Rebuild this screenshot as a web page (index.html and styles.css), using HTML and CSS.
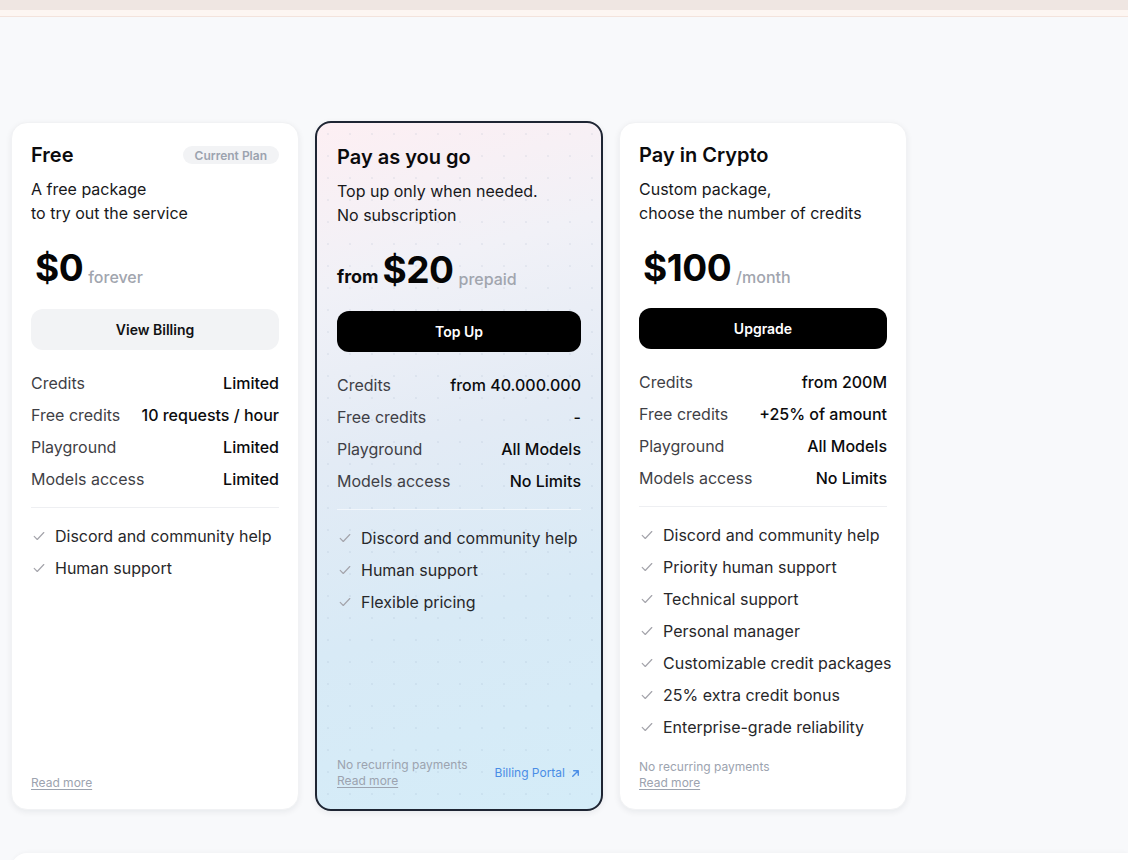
FILE: index.html
```html
<!DOCTYPE html>
<html lang="en">
<head>
<meta charset="utf-8">
<title>Plans</title>
<link rel="stylesheet" href="styles.css">
</head>
<body>
<div class="topbar"><div class="topbar-strip"></div></div>
<main class="page">
  <div class="plans">
    <article class="card">
      <header class="card-head">
        <h2 class="card-title">Free</h2>
        <span class="badge">Current Plan</span>
      </header>
      <p class="card-desc">A free package<br>to try out the service</p>
      <div class="price"><span class="price-amount">$0</span><span class="price-unit">forever</span></div>
      <button class="btn btn-light">View Billing</button>
      <dl class="specs">
        <div class="spec"><dt>Credits</dt><dd>Limited</dd></div>
        <div class="spec"><dt>Free credits</dt><dd>10 requests / hour</dd></div>
        <div class="spec"><dt>Playground</dt><dd>Limited</dd></div>
        <div class="spec"><dt>Models access</dt><dd>Limited</dd></div>
      </dl>
      <hr class="divider">
      <ul class="features">
        <li><svg class="check" viewBox="0 0 16 16"><path d="M2.5 8.5l3.5 3.5 7.5-8"/></svg>Discord and community help</li>
        <li><svg class="check" viewBox="0 0 16 16"><path d="M2.5 8.5l3.5 3.5 7.5-8"/></svg>Human support</li>
      </ul>
      <footer class="card-foot">
        <div class="foot-notes"><a class="read-more" href="#">Read more</a></div>
      </footer>
    </article>

    <article class="card card-featured">
      <header class="card-head">
        <h2 class="card-title">Pay as you go</h2>
      </header>
      <p class="card-desc">Top up only when needed.<br>No subscription</p>
      <div class="price"><span class="price-from">from</span><span class="price-amount">$20</span><span class="price-unit">prepaid</span></div>
      <button class="btn btn-dark">Top Up</button>
      <dl class="specs">
        <div class="spec"><dt>Credits</dt><dd>from 40.000.000</dd></div>
        <div class="spec"><dt>Free credits</dt><dd>-</dd></div>
        <div class="spec"><dt>Playground</dt><dd>All Models</dd></div>
        <div class="spec"><dt>Models access</dt><dd>No Limits</dd></div>
      </dl>
      <hr class="divider">
      <ul class="features">
        <li><svg class="check" viewBox="0 0 16 16"><path d="M2.5 8.5l3.5 3.5 7.5-8"/></svg>Discord and community help</li>
        <li><svg class="check" viewBox="0 0 16 16"><path d="M2.5 8.5l3.5 3.5 7.5-8"/></svg>Human support</li>
        <li><svg class="check" viewBox="0 0 16 16"><path d="M2.5 8.5l3.5 3.5 7.5-8"/></svg>Flexible pricing</li>
      </ul>
      <footer class="card-foot">
        <div class="foot-notes">
          <span class="foot-note">No recurring payments</span>
          <a class="read-more" href="#">Read more</a>
        </div>
        <a class="portal-link" href="#">Billing Portal<svg class="arrow" viewBox="0 0 12 12"><path d="M3 9L9 3M4 3h5v5"/></svg></a>
      </footer>
    </article>

    <article class="card">
      <header class="card-head">
        <h2 class="card-title">Pay in Crypto</h2>
      </header>
      <p class="card-desc">Custom package,<br>choose the number of credits</p>
      <div class="price"><span class="price-amount">$100</span><span class="price-unit">/month</span></div>
      <button class="btn btn-dark btn-tight">Upgrade</button>
      <dl class="specs">
        <div class="spec"><dt>Credits</dt><dd>from 200M</dd></div>
        <div class="spec"><dt>Free credits</dt><dd>+25% of amount</dd></div>
        <div class="spec"><dt>Playground</dt><dd>All Models</dd></div>
        <div class="spec"><dt>Models access</dt><dd>No Limits</dd></div>
      </dl>
      <hr class="divider">
      <ul class="features">
        <li><svg class="check" viewBox="0 0 16 16"><path d="M2.5 8.5l3.5 3.5 7.5-8"/></svg>Discord and community help</li>
        <li><svg class="check" viewBox="0 0 16 16"><path d="M2.5 8.5l3.5 3.5 7.5-8"/></svg>Priority human support</li>
        <li><svg class="check" viewBox="0 0 16 16"><path d="M2.5 8.5l3.5 3.5 7.5-8"/></svg>Technical support</li>
        <li><svg class="check" viewBox="0 0 16 16"><path d="M2.5 8.5l3.5 3.5 7.5-8"/></svg>Personal manager</li>
        <li><svg class="check" viewBox="0 0 16 16"><path d="M2.5 8.5l3.5 3.5 7.5-8"/></svg>Customizable credit packages</li>
        <li><svg class="check" viewBox="0 0 16 16"><path d="M2.5 8.5l3.5 3.5 7.5-8"/></svg>25% extra credit bonus</li>
        <li><svg class="check" viewBox="0 0 16 16"><path d="M2.5 8.5l3.5 3.5 7.5-8"/></svg>Enterprise-grade reliability</li>
      </ul>
      <footer class="card-foot">
        <div class="foot-notes">
          <span class="foot-note">No recurring payments</span>
          <a class="read-more" href="#">Read more</a>
        </div>
      </footer>
    </article>
  </div>
  <div class="next-section"></div>
</main>
</body>
</html>
```
FILE: styles.css
```css
* { box-sizing: border-box; }

html, body {
  margin: 0;
  padding: 0;
  background: #f8f9fb;
  font-family: Inter, "Noto Sans", "Liberation Sans", sans-serif;
  color: #111113;
  overflow: hidden;
}

.topbar {
  background: #efe6e2;
  padding-top: 10px;
}

.topbar-strip {
  height: 7px;
  background: #fdf6f2;
  border-bottom: 1px solid #f3e3dc;
}

.page {
  padding: 105px 0 0 11px;
}

.plans {
  display: grid;
  grid-template-columns: repeat(3, 288px);
  column-gap: 16px;
  align-items: stretch;
}

.card {
  display: flex;
  flex-direction: column;
  background: #ffffff;
  border: 1px solid #f1f2f4;
  border-radius: 16px;
  padding: 18px 19px 18px 19px;
  box-shadow: 0 2px 6px rgba(15, 23, 42, 0.07);
}

.card-featured {
  margin: -1px 0;
  border: 2px solid #1e2533;
  padding: 20px 20px 20px 20px;
  background:
    radial-gradient(circle, rgba(120, 140, 170, 0.10) 1px, transparent 1.2px) 0 0 / 22px 22px,
    linear-gradient(165deg, #fdeff3 0%, #f1f1f7 22%, #e3ebf5 45%, #d8eaf6 70%, #d4ecf8 100%);
}

.card-head {
  display: flex;
  align-items: center;
  justify-content: space-between;
  height: 28px;
}

.card-title {
  margin: 0;
  font-size: 20px;
  line-height: 28px;
  font-weight: 600;
  color: #0b0b0d;
}

.badge {
  display: inline-flex;
  align-items: center;
  height: 18px;
  padding: 0 12px;
  border-radius: 999px;
  background: #f2f3f5;
  color: #9ca3af;
  font-size: 12px;
  font-weight: 600;
}

.card-desc {
  margin: 8px 0 0;
  font-size: 16px;
  line-height: 24px;
  color: #18181b;
}

.price {
  margin-top: 23px;
  height: 40px;
  line-height: 40px;
  white-space: nowrap;
}

.price-from {
  font-size: 18px;
  font-weight: 700;
  color: #0b0b0d;
}

.price-amount {
  margin: 0 5px 0 4px;
  font-size: 37px;
  font-weight: 700;
  color: #050505;
  letter-spacing: -0.5px;
}

.price-unit {
  font-size: 16px;
  font-weight: 500;
  color: #a1a5ae;
  vertical-align: -2px;
}

.btn {
  display: block;
  margin-top: 21px;
  height: 41px;
  width: 100%;
  border: 0;
  border-radius: 12px;
  font-family: inherit;
  font-size: 14px;
  font-weight: 600;
  cursor: pointer;
}

.btn-tight { margin-top: 20px; }

.btn-light {
  background: #f2f3f5;
  color: #111113;
}

.btn-dark {
  background: #000000;
  color: #ffffff;
}

.specs {
  margin: 21px 0 0;
  display: flex;
  flex-direction: column;
  gap: 8px;
}

.spec {
  display: flex;
  justify-content: space-between;
  font-size: 16px;
  line-height: 24px;
}

.spec dt {
  color: #3f3f46;
}

.spec dd {
  margin: 0;
  font-weight: 500;
  color: #0b0b0d;
}

.divider {
  margin: 16px 0 0;
  border: 0;
  border-top: 1px solid #eeeff2;
  height: 0;
}

.card-featured .divider {
  border-top-color: rgba(255, 255, 255, 0.55);
}

.features {
  list-style: none;
  margin: 16px 0 0;
  padding: 0;
  display: flex;
  flex-direction: column;
  gap: 8px;
}

.features li {
  display: flex;
  align-items: center;
  font-size: 16px;
  line-height: 24px;
  color: #27272a;
  white-space: nowrap;
}

.check {
  width: 14px;
  height: 14px;
  margin: 0 9px 0 1px;
  fill: none;
  stroke: #a3a3aa;
  stroke-width: 1.3;
  stroke-linecap: round;
  stroke-linejoin: round;
  flex: none;
}

.card-foot {
  margin-top: auto;
  padding-top: 20px;
  display: flex;
  align-items: center;
  justify-content: space-between;
}

.foot-notes {
  display: flex;
  flex-direction: column;
}

.foot-note,
.read-more {
  font-size: 12px;
  line-height: 16px;
  color: #9ca3af;
}

.read-more {
  text-decoration: underline;
  text-underline-offset: 2px;
}

.portal-link {
  display: inline-flex;
  align-items: center;
  gap: 5px;
  font-size: 12px;
  line-height: 16px;
  color: #4a8de6;
  text-decoration: none;
}

.arrow {
  width: 11px;
  height: 11px;
  fill: none;
  stroke: #4a8de6;
  stroke-width: 1.5;
  stroke-linecap: round;
  stroke-linejoin: round;
}

.next-section {
  margin-top: 43px;
  height: 40px;
  background: #ffffff;
  border-radius: 16px 0 0 0;
  box-shadow: 0 -1px 4px rgba(15, 23, 42, 0.03);
}
```
